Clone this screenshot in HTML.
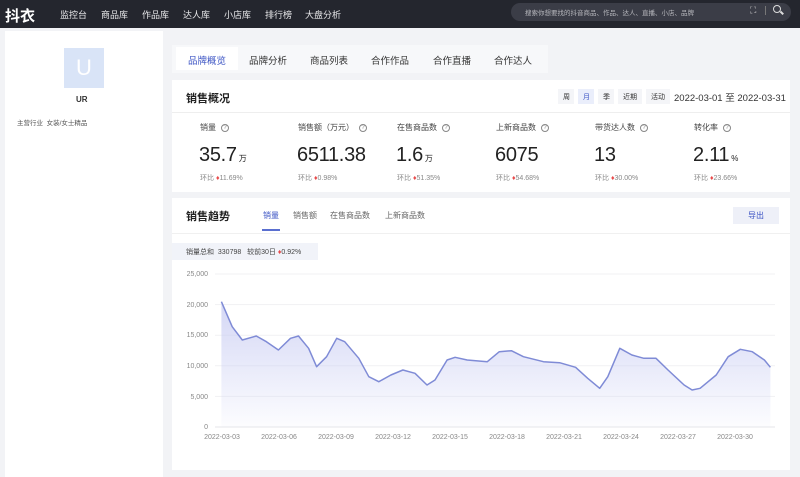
<!DOCTYPE html>
<html><head><meta charset="utf-8"><style>
*{margin:0;padding:0;box-sizing:border-box}
body{width:800px;height:477px;overflow:hidden;background:#f2f3f6;font-family:"Liberation Sans","Noto Sans CJK SC",sans-serif;color:#333;position:relative}
.a{position:absolute;white-space:nowrap}
.hd{left:0;top:0;width:800px;height:28px;background:#24262e}
.nav{color:#e8e8ea;font-size:9px;top:8px}
.card{background:#fff}
.lab{font-size:8px;color:#444;top:122px}
.val{font-size:20px;color:#222;top:144px;letter-spacing:-0.3px}
.val small{font-size:8px;margin-left:2px}
.hb{font-size:7px;color:#888;top:173px}
.hb b{color:#e84b4b;font-weight:normal}
.q{display:inline-block;width:8px;height:8px;border:1px solid #888;border-radius:50%;font-size:6px;line-height:6px;text-align:center;color:#888;margin-left:5px;vertical-align:1px}
.ax{font-size:7px;color:#888}
</style></head><body>
<div class="a hd"></div>
<div class="a" style="left:5px;top:5px;color:#fff;font-size:15px;font-weight:bold">抖衣</div>
<div class="a nav" style="left:60px">监控台</div>
<div class="a nav" style="left:101px">商品库</div>
<div class="a nav" style="left:142px">作品库</div>
<div class="a nav" style="left:183px">达人库</div>
<div class="a nav" style="left:224px">小店库</div>
<div class="a nav" style="left:265px">排行榜</div>
<div class="a nav" style="left:305px">大盘分析</div>
<div class="a" style="left:511px;top:3px;width:280px;height:18px;border-radius:9px;background:#3b3d47"></div>
<div class="a" style="left:525px;top:7px;font-size:6.5px;color:#b8b9be">搜索你想要找的抖音商品、作品、达人、直播、小店、品牌</div>
<div class="a" style="left:750px;top:5px;font-size:9px;color:#ccc">⛶</div>
<div class="a" style="left:765px;top:6px;width:1px;height:9px;background:#777"></div>
<div class="a" style="left:773px;top:5px;width:8px;height:8px;border:1.5px solid #ddd;border-radius:50%"></div>
<div class="a" style="left:780px;top:12px;width:4px;height:1.5px;background:#ddd;transform:rotate(45deg)"></div>

<div class="a card" style="left:5px;top:31px;width:158px;height:446px"></div>
<div class="a" style="left:64px;top:48px;width:40px;height:40px;background:#d9e4f7;color:#fff;font-size:22px;text-align:center;line-height:40px">U</div>
<div class="a" style="left:76px;top:95px;font-size:8px;font-weight:bold;color:#333">UR</div>
<div class="a" style="left:17px;top:117px;font-size:6.5px;color:#555">主营行业&nbsp;&nbsp;女装/女士精品</div>

<div class="a" style="left:172px;top:45px;width:376px;height:28px;background:#f7f8fa"></div>
<div class="a card" style="left:176px;top:47px;width:62px;height:23px"></div>
<div class="a" style="left:188px;top:53px;font-size:9.5px;color:#3d55c4">品牌概览</div>
<div class="a" style="left:249px;top:53px;font-size:9.5px;color:#333">品牌分析</div>
<div class="a" style="left:310px;top:53px;font-size:9.5px;color:#333">商品列表</div>
<div class="a" style="left:371px;top:53px;font-size:9.5px;color:#333">合作作品</div>
<div class="a" style="left:433px;top:53px;font-size:9.5px;color:#333">合作直播</div>
<div class="a" style="left:494px;top:53px;font-size:9.5px;color:#333">合作达人</div>

<div class="a card" style="left:172px;top:80px;width:618px;height:112px"></div>
<div class="a" style="left:186px;top:90px;font-size:11px;font-weight:bold;color:#222">销售概况</div>
<div class="a" style="left:558px;top:89px;width:16px;height:15px;background:#f4f5f8"></div>
<div class="a" style="left:578px;top:89px;width:16px;height:15px;background:#eaeefb"></div>
<div class="a" style="left:598px;top:89px;width:16px;height:15px;background:#f4f5f8"></div>
<div class="a" style="left:618px;top:89px;width:24px;height:15px;background:#f4f5f8"></div>
<div class="a" style="left:646px;top:89px;width:24px;height:15px;background:#f4f5f8"></div>
<div class="a" style="left:563px;top:92px;font-size:7px;color:#333">周</div>
<div class="a" style="left:583px;top:92px;font-size:7px;color:#3d55c4">月</div>
<div class="a" style="left:603px;top:92px;font-size:7px;color:#333">季</div>
<div class="a" style="left:623px;top:92px;font-size:7px;color:#333">近期</div>
<div class="a" style="left:651px;top:92px;font-size:7px;color:#333">活动</div>
<div class="a" style="left:674px;top:90px;font-size:9.5px;color:#333">2022-03-01 至 2022-03-31</div>
<div class="a" style="left:172px;top:112px;width:618px;height:1px;background:#eee"></div>

<div class="a lab" style="left:200px">销量<span class="q">?</span></div>
<div class="a lab" style="left:298px">销售额（万元）<span class="q">?</span></div>
<div class="a lab" style="left:397px">在售商品数<span class="q">?</span></div>
<div class="a lab" style="left:496px">上新商品数<span class="q">?</span></div>
<div class="a lab" style="left:595px">带货达人数<span class="q">?</span></div>
<div class="a lab" style="left:694px">转化率<span class="q">?</span></div>
<div class="a val" style="left:199px">35.7<small>万</small></div>
<div class="a val" style="left:297px">6511.38</div>
<div class="a val" style="left:396px">1.6<small>万</small></div>
<div class="a val" style="left:495px">6075</div>
<div class="a val" style="left:594px">13</div>
<div class="a val" style="left:693px">2.11<small>%</small></div>
<div class="a hb" style="left:200px">环比 <b>♦</b>11.69%</div>
<div class="a hb" style="left:298px">环比 <b>♦</b>0.98%</div>
<div class="a hb" style="left:397px">环比 <b>♦</b>51.35%</div>
<div class="a hb" style="left:496px">环比 <b>♦</b>54.68%</div>
<div class="a hb" style="left:595px">环比 <b>♦</b>30.00%</div>
<div class="a hb" style="left:694px">环比 <b>♦</b>23.66%</div>

<div class="a card" style="left:172px;top:198px;width:618px;height:272px"></div>
<div class="a" style="left:186px;top:208px;font-size:11px;font-weight:bold;color:#222">销售趋势</div>
<div class="a" style="left:263px;top:210px;font-size:8px;color:#3d55c4">销量</div>
<div class="a" style="left:262px;top:229px;width:18px;height:2px;background:#5a6fd0"></div>
<div class="a" style="left:293px;top:210px;font-size:8px;color:#666">销售额</div>
<div class="a" style="left:330px;top:210px;font-size:8px;color:#666">在售商品数</div>
<div class="a" style="left:385px;top:210px;font-size:8px;color:#666">上新商品数</div>
<div class="a" style="left:733px;top:207px;width:46px;height:17px;background:#eef0f8;color:#3d55c4;font-size:8px;text-align:center;line-height:17px">导出</div>
<div class="a" style="left:172px;top:233px;width:618px;height:1px;background:#f0f0f0"></div>
<div class="a" style="left:172px;top:243px;width:146px;height:17px;background:#f1f3f9"></div>
<div class="a" style="left:186px;top:247px;font-size:7px;color:#444">销量总和&nbsp; 330798 &nbsp; 较前30日 <span style="color:#e84b4b">♦</span>0.92%</div>

<svg class="a" style="left:0;top:0" width="800" height="477">
<defs><linearGradient id="g" x1="0" y1="0" x2="0" y2="1"><stop offset="0" stop-color="#c9cdf3" stop-opacity=".8"/><stop offset="1" stop-color="#c9cdf3" stop-opacity=".05"/></linearGradient></defs>
<g stroke="#f1f1f3" stroke-width="1">
<line x1="215" y1="274" x2="775" y2="274"/><line x1="215" y1="304.6" x2="775" y2="304.6"/><line x1="215" y1="335.2" x2="775" y2="335.2"/><line x1="215" y1="365.8" x2="775" y2="365.8"/><line x1="215" y1="396.4" x2="775" y2="396.4"/><line x1="215" y1="427" x2="775" y2="427" stroke="#e6e6ea"/>
</g>
<polygon fill="url(#g)" points="221.4,301.7 232.2,326.7 242.3,340 256.3,336 266.4,341.7 278.4,350 290.5,338.3 298.5,336 308.6,348.3 316.6,366.7 326.6,356.7 336.7,338.3 344.7,341.7 358.8,358.3 368.8,376.7 378.8,381.7 390.9,375 402.9,370 415,373.3 427,385 435,380 447.1,360 455.1,357.3 467.2,360 487.3,361.7 499.3,351.7 511.4,350.7 523.4,356.7 543.5,361.7 559.6,362.7 575.6,367.3 587.7,378.3 599.7,388.3 607.8,376.7 619.8,348.3 631.9,355 643.9,358.3 656,358.3 668,370 684.1,385 692.1,390 700.1,388.3 716.2,375 728.2,356.7 740.3,349.3 752.3,351.7 764.4,360 770.4,367.3 770.4,427 221.4,427"/>
<polyline fill="none" stroke="#7f8bd6" stroke-width="1.5" stroke-linejoin="round" points="221.4,301.7 232.2,326.7 242.3,340 256.3,336 266.4,341.7 278.4,350 290.5,338.3 298.5,336 308.6,348.3 316.6,366.7 326.6,356.7 336.7,338.3 344.7,341.7 358.8,358.3 368.8,376.7 378.8,381.7 390.9,375 402.9,370 415,373.3 427,385 435,380 447.1,360 455.1,357.3 467.2,360 487.3,361.7 499.3,351.7 511.4,350.7 523.4,356.7 543.5,361.7 559.6,362.7 575.6,367.3 587.7,378.3 599.7,388.3 607.8,376.7 619.8,348.3 631.9,355 643.9,358.3 656,358.3 668,370 684.1,385 692.1,390 700.1,388.3 716.2,375 728.2,356.7 740.3,349.3 752.3,351.7 764.4,360 770.4,367.3"/>
<g font-family="Liberation Sans" font-size="7" fill="#888" text-anchor="end">
<text x="208" y="276">25,000</text><text x="208" y="307">20,000</text><text x="208" y="337">15,000</text><text x="208" y="368">10,000</text><text x="208" y="399">5,000</text><text x="208" y="429">0</text>
</g>
<g font-family="Liberation Sans" font-size="7" fill="#888" text-anchor="middle">
<text x="222" y="439">2022-03-03</text><text x="279" y="439">2022-03-06</text><text x="336" y="439">2022-03-09</text><text x="393" y="439">2022-03-12</text><text x="450" y="439">2022-03-15</text><text x="507" y="439">2022-03-18</text><text x="564" y="439">2022-03-21</text><text x="621" y="439">2022-03-24</text><text x="678" y="439">2022-03-27</text><text x="735" y="439">2022-03-30</text>
</g>
</svg>
</body></html>
